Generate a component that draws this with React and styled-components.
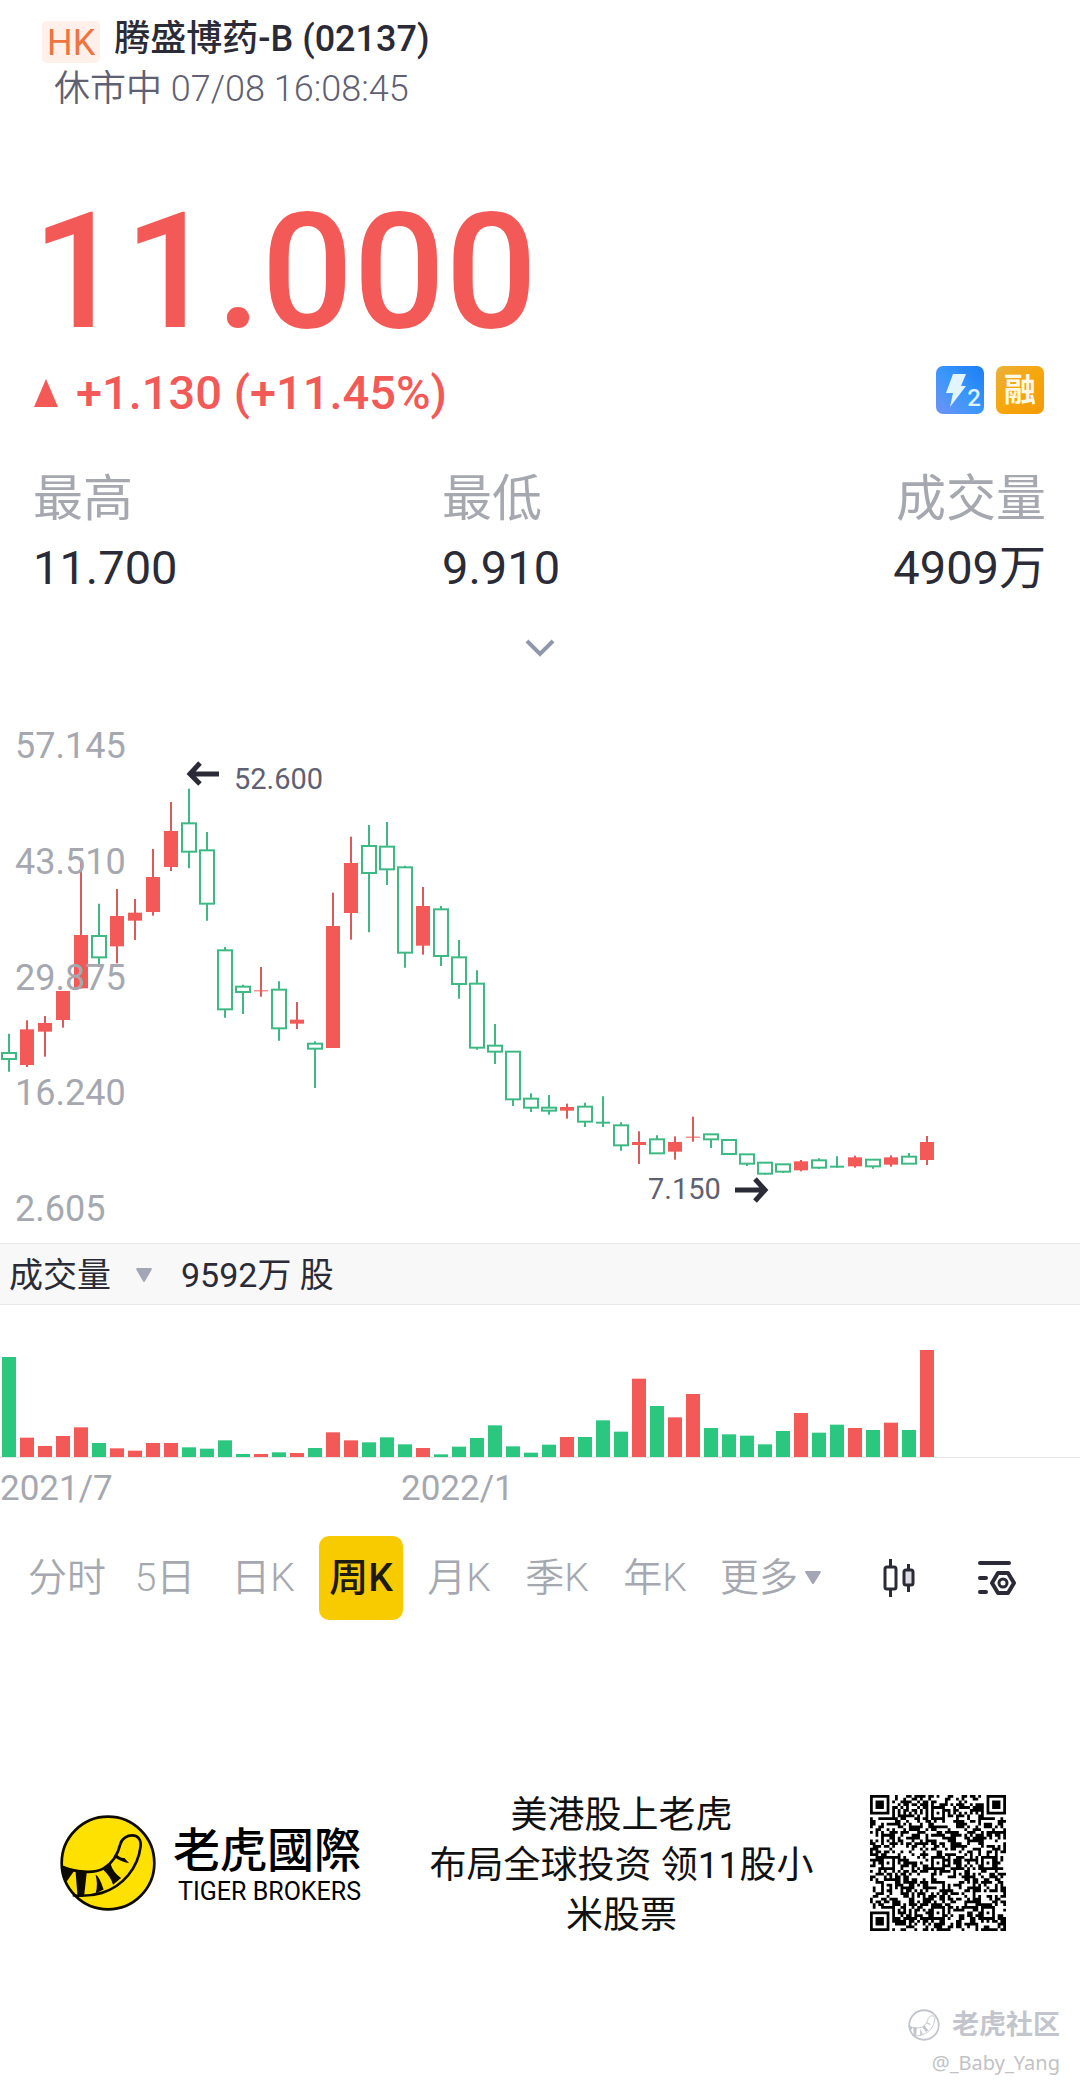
import React from 'react';
import styled, { createGlobalStyle } from 'styled-components';

const RED = '#f25957';
const GREEN = '#2bc77f';
const GREEN_LINE = '#3fb984';
const INK = '#2a2b36';
const SLATE = '#5f6172';
const MUTED = '#a6a8b0';

const GlobalStyle = createGlobalStyle`
  *, *::before, *::after { box-sizing: border-box; }
  body {
    margin: 0;
    background: #ffffff;
    color: ${INK};
    font-family: Roboto, "Noto Sans CJK SC", sans-serif;
  }
  h1, p, dl, dt, dd { margin: 0; font-weight: inherit; }
  button {
    margin: 0;
    padding: 0;
    border: 0;
    background: none;
    color: inherit;
    font: inherit;
    cursor: pointer;
  }
  svg { display: block; }
`;

const Page = styled.main`
  display: flex;
  flex-direction: column;
  padding-bottom: 6px;
`;

const Header = styled.header`
  padding: 17px 42px 0;
`;

const TitleRow = styled.div`
  display: flex;
  align-items: flex-end;
  gap: 14px;
  height: 46px;
`;

const Market = styled.span`
  padding: 3px 5px 0;
  border-radius: 5px;
  background: #fff1ea;
  color: #ee7440;
  font-size: 36px;
  line-height: 39px;
`;

const StockName = styled.h1`
  align-self: flex-start;
  font-size: 36px;
  font-weight: 500;
  line-height: 44px;
`;

const Session = styled.p`
  padding-left: 12px;
  color: ${SLATE};
  font-size: 36px;
  font-weight: 350;
  line-height: 52px;
`;

const Price = styled.p`
  margin-top: 72px;
  padding-left: 32px;
  color: ${RED};
  font-size: 162px;
  font-weight: 500;
  line-height: 170px;
`;

const ChangeRow = styled.div`
  display: flex;
  align-items: flex-start;
  justify-content: space-between;
  margin-top: 9px;
  padding: 0 36px 0 34px;
`;

const Change = styled.p`
  display: flex;
  align-items: center;
  gap: 18px;
  color: ${RED};
  font-size: 47px;
  font-weight: 500;
  line-height: 54px;
`;

const Badges = styled.div`
  display: flex;
  gap: 12px;
`;

const Badge = styled.span`
  position: relative;
  display: flex;
  align-items: center;
  justify-content: center;
  width: 48px;
  height: 48px;
  border-radius: 7px;
  background: ${(p) => p.$fill};
  color: #fff8e6;
  font-size: 32px;
  font-weight: 700;
  line-height: 48px;
`;

const Level = styled.span`
  position: absolute;
  right: 3px;
  bottom: 4px;
  color: #ddf3ff;
  font-size: 24px;
  font-weight: 500;
  line-height: 24px;
`;

const Stats = styled.dl`
  display: grid;
  grid-template-columns: 409fr 302fr 302fr;
  margin-top: 49px;
  padding: 0 34px 0 33px;
`;

const Stat = styled.div`
  display: flex;
  flex-direction: column;
  gap: 9px;
  text-align: ${(p) => p.$align || 'left'};
`;

const StatLabel = styled.dt`
  color: ${MUTED};
  font-size: 50px;
  line-height: 60px;
`;

const StatValue = styled.dd`
  font-size: 47px;
  line-height: 60px;
`;

const Expand = styled.button`
  align-self: center;
  margin: 30px 0 42px;
  padding: 10px;
`;

const ChartArea = styled.section`
  display: grid;
  & > * { grid-area: 1 / 1; }
`;

const Plot = styled.svg`
  width: 100%;
  height: auto;
`;

const PriceScale = styled.div`
  display: flex;
  flex-direction: column;
  justify-content: space-between;
  padding: 16px 0 14px 15px;
  color: ${MUTED};
  font-size: 36px;
  line-height: 40px;
  pointer-events: none;
`;

const VolumeBar = styled.div`
  display: flex;
  align-items: center;
  gap: 28px;
  height: 62px;
  padding: 2px 9px 0;
  border-top: 1px solid #e9e9eb;
  border-bottom: 1px solid #e9e9eb;
  background: #f8f8f9;
  font-size: 34px;
  line-height: 58px;
`;

const Picker = styled.button`
  display: flex;
  align-items: center;
  gap: 24px;
`;

const DateScale = styled.div`
  display: grid;
  grid-template-columns: 401fr 679fr;
  margin-top: 11px;
  color: ${MUTED};
  font-size: 35px;
  line-height: 40px;
`;

const Periods = styled.nav`
  display: grid;
  grid-template-columns: repeat(7, 98fr) 134fr 122fr 74fr;
  justify-items: center;
  margin-top: 27px;
  padding: 0 46px 0 18px;
`;

const Period = styled.button`
  display: flex;
  align-items: center;
  justify-content: center;
  gap: 6px;
  min-width: ${(p) => (p.$active ? 84 : 60)}px;
  height: 84px;
  border-radius: 10px;
  background: ${(p) => (p.$active ? '#f8cb00' : 'transparent')};
  color: ${(p) => (p.$active ? '#1d1a12' : MUTED)};
  font-size: 39px;
  font-weight: ${(p) => (p.$active ? 500 : 350)};
  line-height: 84px;
  white-space: nowrap;
`;

const Footer = styled.footer`
  display: flex;
  align-items: center;
  justify-content: space-between;
  margin-top: 165px;
  padding: 0 74px 0 60px;
`;

const Brand = styled.div`
  display: flex;
  align-items: center;
  gap: 17px;
`;

const BrandText = styled.div`
  display: flex;
  flex-direction: column;
  align-items: flex-end;
  padding-bottom: 6px;
  color: #000;
`;

const BrandName = styled.span`
  font-family: "Noto Sans CJK TC", sans-serif;
  font-size: 47px;
  font-weight: 500;
  line-height: 64px;
`;

const BrandLatin = styled.span`
  font-size: 25px;
  line-height: 26px;
`;

const Slogan = styled.p`
  margin-left: 12px;
  padding-top: 6px;
  color: #111;
  font-size: 37px;
  line-height: 50px;
  text-align: center;
`;

const Watermark = styled.aside`
  display: flex;
  flex-direction: column;
  align-items: flex-end;
  margin-top: 64px;
  padding-right: 20px;
  color: #c3c5cc;
`;

const Community = styled.div`
  display: flex;
  align-items: center;
  gap: 12px;
  font-size: 27px;
  font-weight: 700;
  line-height: 40px;
`;

const Author = styled.span`
  color: #c2c2c4;
  font-family: "Noto Sans", sans-serif;
  font-size: 20px;
  line-height: 36px;
`;

// Weekly candles: direction, high, body top, body bottom, low (in thirds of a unit).
const CANDLES = [
  ['g', 971, 1029, 1047, 1085], ['r', 931, 958, 1065, 1071], ['r', 918, 939, 965, 1040],
  ['r', 843, 843, 930, 953], ['r', 450, 675, 835, 835], ['g', 581, 678, 742, 770],
  ['r', 537, 618, 709, 760], ['r', 567, 608, 632, 690], ['r', 417, 501, 606, 617],
  ['r', 276, 363, 471, 483], ['g', 236, 340, 425, 475], ['g', 366, 421, 581, 632],
  ['g', 711, 721, 898, 923], ['g', 824, 830, 846, 912], ['r', 771, 841, 844, 860],
  ['g', 814, 839, 955, 992], ['r', 876, 929, 941, 957], ['g', 994, 1001, 1016, 1134],
  ['r', 548, 648, 1014, 1014], ['r', 380, 459, 609, 689], ['g', 345, 408, 489, 667],
  ['g', 336, 410, 478, 525], ['g', 467, 472, 728, 773], ['r', 531, 588, 707, 734],
  ['g', 588, 598, 738, 768], ['g', 690, 742, 822, 866], ['g', 781, 821, 1013, 1019],
  ['g', 942, 1007, 1025, 1062], ['g', 1025, 1025, 1168, 1188], ['g', 1150, 1166, 1193, 1206],
  ['g', 1155, 1193, 1202, 1214], ['r', 1181, 1191, 1202, 1226], ['g', 1178, 1190, 1235, 1251],
  ['g', 1159, 1235, 1238, 1251], ['g', 1237, 1246, 1306, 1322], ['r', 1264, 1296, 1305, 1362],
  ['g', 1276, 1288, 1330, 1330], ['r', 1279, 1296, 1325, 1349], ['r', 1220, 1280, 1283, 1295],
  ['g', 1273, 1273, 1288, 1314], ['g', 1290, 1290, 1332, 1332], ['g', 1333, 1333, 1361, 1368],
  ['g', 1358, 1358, 1391, 1394], ['g', 1363, 1363, 1385, 1389], ['r', 1350, 1354, 1381, 1384],
  ['g', 1345, 1351, 1373, 1377], ['g', 1339, 1367, 1370, 1373], ['r', 1337, 1342, 1369, 1373],
  ['g', 1349, 1349, 1369, 1376], ['r', 1336, 1342, 1364, 1370], ['g', 1329, 1340, 1361, 1361],
  ['r', 1278, 1296, 1350, 1365],
];

// Weekly volumes, in thirds of a unit, and the side of each week.
const VOLUMES = [
  300, 58, 33, 63, 89, 42, 26, 19, 42, 42, 29, 25, 50, 9, 9, 14, 12, 27, 74, 50, 44, 59, 38, 27,
  8, 31, 57, 95, 32, 13, 37, 60, 60, 110, 76, 235, 153, 119, 189, 87, 68, 64, 38, 78, 132, 73, 97,
  87, 81, 103, 81, 321,
];
const VOLUME_SIDES = 'grrrrgrrrrggggrgrgrrgggrgggggggrgggrgrrgggggrggrgrgr';

const centerX = (i) => 9 + i * 18;

function Candle({ index, data }) {
  const [side, ...levels] = data;
  const [high, top, bottom, low] = levels.map((v) => v / 3);
  const x = centerX(index);
  if (side === 'r') {
    return (
      <g fill={RED}>
        <rect x={x - 1} y={high} width="2" height={low - high} fill="#d95b5b" />
        <rect x={x - 7} y={top} width="14" height={bottom - top} />
      </g>
    );
  }
  return (
    <g stroke={GREEN_LINE} strokeWidth="2" fill="#fff">
      <line x1={x} x2={x} y1={high} y2={low} />
      {bottom - top > 2 ? (
        <rect x={x - 7} y={top} width="14" height={bottom - top} />
      ) : (
        <line x1={x - 7} x2={x + 7} y1={top + 1} y2={top + 1} />
      )}
    </g>
  );
}

function CandleChart() {
  return (
    <Plot viewBox="0 0 1080 533" role="img" aria-label="周K">
      {CANDLES.map((c, i) => <Candle key={i} index={i} data={c} />)}
      <g fill="none" stroke={INK} strokeWidth="5">
        <path d="M219 64H190M200 53l-10 11 10 10" />
        <path d="M735 480h29M755 469l10 11-10 11" />
      </g>
      <g fill={SLATE} fontSize="29">
        <text x="234" y="79">52.600</text>
        <text x="648" y="489">7.150</text>
      </g>
    </Plot>
  );
}

function VolumeChart() {
  return (
    <Plot viewBox="0 0 1080 153" role="img" aria-label="成交量">
      <rect x="0" y="152" width="1080" height="1" fill="#e6e6ea" />
      {VOLUMES.map((v, i) => (
        <rect
          key={i}
          x={centerX(i) - 7}
          y={152 - v / 3}
          width="14"
          height={v / 3}
          fill={VOLUME_SIDES[i] === 'r' ? RED : GREEN}
        />
      ))}
    </Plot>
  );
}

function TailShape() {
  return (
    <>
      <path
        d="M66 258C105 274 160 280 190 263C222 244 234 215 240 190C248 158 306 152 300 198C292 262 248 316 185 336C155 345 125 346 98 343"
        fill="none"
        stroke="currentColor"
        strokeWidth="8"
      />
      <path
        d="M64 254L104 268L80 302Q66 280 64 254ZM106 268L140 272L132 344L112 344ZM166 282Q176 284 190 326L166 338Q174 310 166 282ZM188 266L210 248Q218 276 242 292L218 312Q212 288 188 266ZM220 228L228 220Q240 234 252 232L266 248Q240 244 220 228Z"
        fill="currentColor"
      />
    </>
  );
}

function TigerLogo() {
  return (
    <svg width="96" height="96" viewBox="60 104 286 286" color="#0d0b00" aria-hidden="true">
      <circle cx="203" cy="247" r="138" fill="#ffe100" stroke="#0d0b00" strokeWidth="8" />
      <TailShape />
    </svg>
  );
}

function TigerOutline() {
  return (
    <svg width="32" height="32" viewBox="60 104 286 286" aria-hidden="true">
      <circle cx="203" cy="247" r="132" fill="none" stroke="currentColor" strokeWidth="16" />
      <TailShape />
    </svg>
  );
}

const QR_SIZE = 49;
const QR_EYES = [[0, 0], [QR_SIZE - 7, 0], [0, QR_SIZE - 7]];
const QR_MARKS = [6, 24, 42];

function qrModule(x, y) {
  for (const [ex, ey] of QR_EYES) {
    const dx = x - ex;
    const dy = y - ey;
    if (dx >= -1 && dx <= 7 && dy >= -1 && dy <= 7) {
      const ring = Math.max(Math.abs(dx - 3), Math.abs(dy - 3));
      return ring === 3 || ring <= 1;
    }
  }
  for (const mx of QR_MARKS) {
    for (const my of QR_MARKS) {
      const ring = Math.max(Math.abs(x - mx), Math.abs(y - my));
      if (ring <= 2) return ring !== 1;
    }
  }
  if (x === 6 || y === 6) return (x + y) % 2 === 0;
  let h = (x * 374761393 + y * 668265263) | 0;
  h = Math.imul(h ^ (h >>> 13), 1274126177);
  return ((h ^ (h >>> 16)) & 255) < 130;
}

function QrCode() {
  let d = '';
  for (let y = 0; y < QR_SIZE; y += 1) {
    for (let x = 0; x < QR_SIZE; x += 1) {
      if (qrModule(x, y)) d += `M${x} ${y}h1v1h-1z`;
    }
  }
  return (
    <svg width="136" height="136" viewBox="0 0 49 49" role="img" aria-label="QR">
      <path d={d} fill="#000" />
    </svg>
  );
}

function DownTriangle({ width, height }) {
  return (
    <svg width={width} height={height} viewBox="0 0 16 14" preserveAspectRatio="none" aria-hidden="true">
      <path d="M2 1H14L8 12Z" fill="#a3a6b4" stroke="#a3a6b4" strokeWidth="2" strokeLinejoin="round" />
    </svg>
  );
}

function Bolt() {
  return (
    <svg width="48" height="48" viewBox="0 0 48 48" aria-hidden="true">
      <path d="M17 8H30L25 20H30L14 41L17 27H10Z" fill="#e2f5ff" />
    </svg>
  );
}

const PERIODS = ['分时', '5日', '日K', '周K', '月K', '季K', '年K'];

const STATS = [
  { label: '最高', value: '11.700' },
  { label: '最低', value: '9.910' },
  { label: '成交量', value: '4909万', align: 'right' },
];

export default function App() {
  return (
    <Page>
      <GlobalStyle />
      <Header>
        <TitleRow>
          <Market>HK</Market>
          <StockName>腾盛博药-B (02137)</StockName>
        </TitleRow>
        <Session>休市中 07/08 16:08:45</Session>
      </Header>

      <Price>11.000</Price>
      <ChangeRow>
        <Change>
          <svg width="24" height="28" viewBox="0 0 24 28" aria-hidden="true">
            <path d="M12 0L24 28H0Z" fill={RED} />
          </svg>
          +1.130 (+11.45%)
        </Change>
        <Badges>
          <Badge $fill="linear-gradient(45deg, #6f92f5, #3a97fb 50%, #1b7cf5)">
            <Bolt />
            <Level>2</Level>
          </Badge>
          <Badge $fill="linear-gradient(135deg, #e9b13a, #f7a60c 50%, #f39a08)">融</Badge>
        </Badges>
      </ChangeRow>

      <Stats>
        {STATS.map((s) => (
          <Stat key={s.label} $align={s.align}>
            <StatLabel>{s.label}</StatLabel>
            <StatValue>{s.value}</StatValue>
          </Stat>
        ))}
      </Stats>

      <Expand type="button" aria-label="展开">
        <svg width="30" height="20" viewBox="0 0 30 20" fill="none" aria-hidden="true">
          <path d="M2 3L15 16L28 3" stroke="#9197ab" strokeWidth="4" />
        </svg>
      </Expand>

      <ChartArea>
        <CandleChart />
        <PriceScale>
          {['57.145', '43.510', '29.875', '16.240', '2.605'].map((v) => <span key={v}>{v}</span>)}
        </PriceScale>
      </ChartArea>

      <VolumeBar>
        <Picker type="button">
          成交量
          <DownTriangle width={18} height={15} />
        </Picker>
        <span>9592万 股</span>
      </VolumeBar>
      <VolumeChart />
      <DateScale>
        <span>2021/7</span>
        <span>2022/1</span>
      </DateScale>

      <Periods>
        {PERIODS.map((p) => (
          <Period key={p} type="button" $active={p === '周K'} aria-pressed={p === '周K'}>{p}</Period>
        ))}
        <Period type="button">
          更多
          <DownTriangle width={18} height={14} />
        </Period>
        <Period type="button" aria-label="K线样式">
          <svg width="32" height="40" viewBox="0 0 32 40" fill="none" stroke={INK} strokeWidth="3" aria-hidden="true">
            <rect x="2" y="9" width="11" height="22" rx="2" />
            <path d="M7.500 1V9M7.500 31V39" />
            <rect x="21" y="12" width="9" height="15" rx="2" fill="#dcdce2" />
            <path d="M25.500 6V12M25.500 27V34" />
          </svg>
        </Period>
        <Period type="button" aria-label="设置">
          <svg width="38" height="36" viewBox="0 0 38 36" fill="none" stroke={INK} strokeWidth="4" strokeLinecap="round" strokeLinejoin="round" aria-hidden="true">
            <path d="M2 3H31M2 18H8M2 32H8" />
            <path d="M20 13H30L36 23L30 33H20L14 23Z" />
            <circle cx="25" cy="23" r="4" strokeWidth="3" />
          </svg>
        </Period>
      </Periods>

      <Footer>
        <Brand>
          <TigerLogo />
          <BrandText>
            <BrandName>老虎國際</BrandName>
            <BrandLatin>TIGER BROKERS</BrandLatin>
          </BrandText>
        </Brand>
        <Slogan>
          美港股上老虎<br />
          布局全球投资 领11股小<br />
          米股票
        </Slogan>
        <QrCode />
      </Footer>

      <Watermark>
        <Community>
          <TigerOutline />
          老虎社区
        </Community>
        <Author>@_Baby_Yang</Author>
      </Watermark>
    </Page>
  );
}
